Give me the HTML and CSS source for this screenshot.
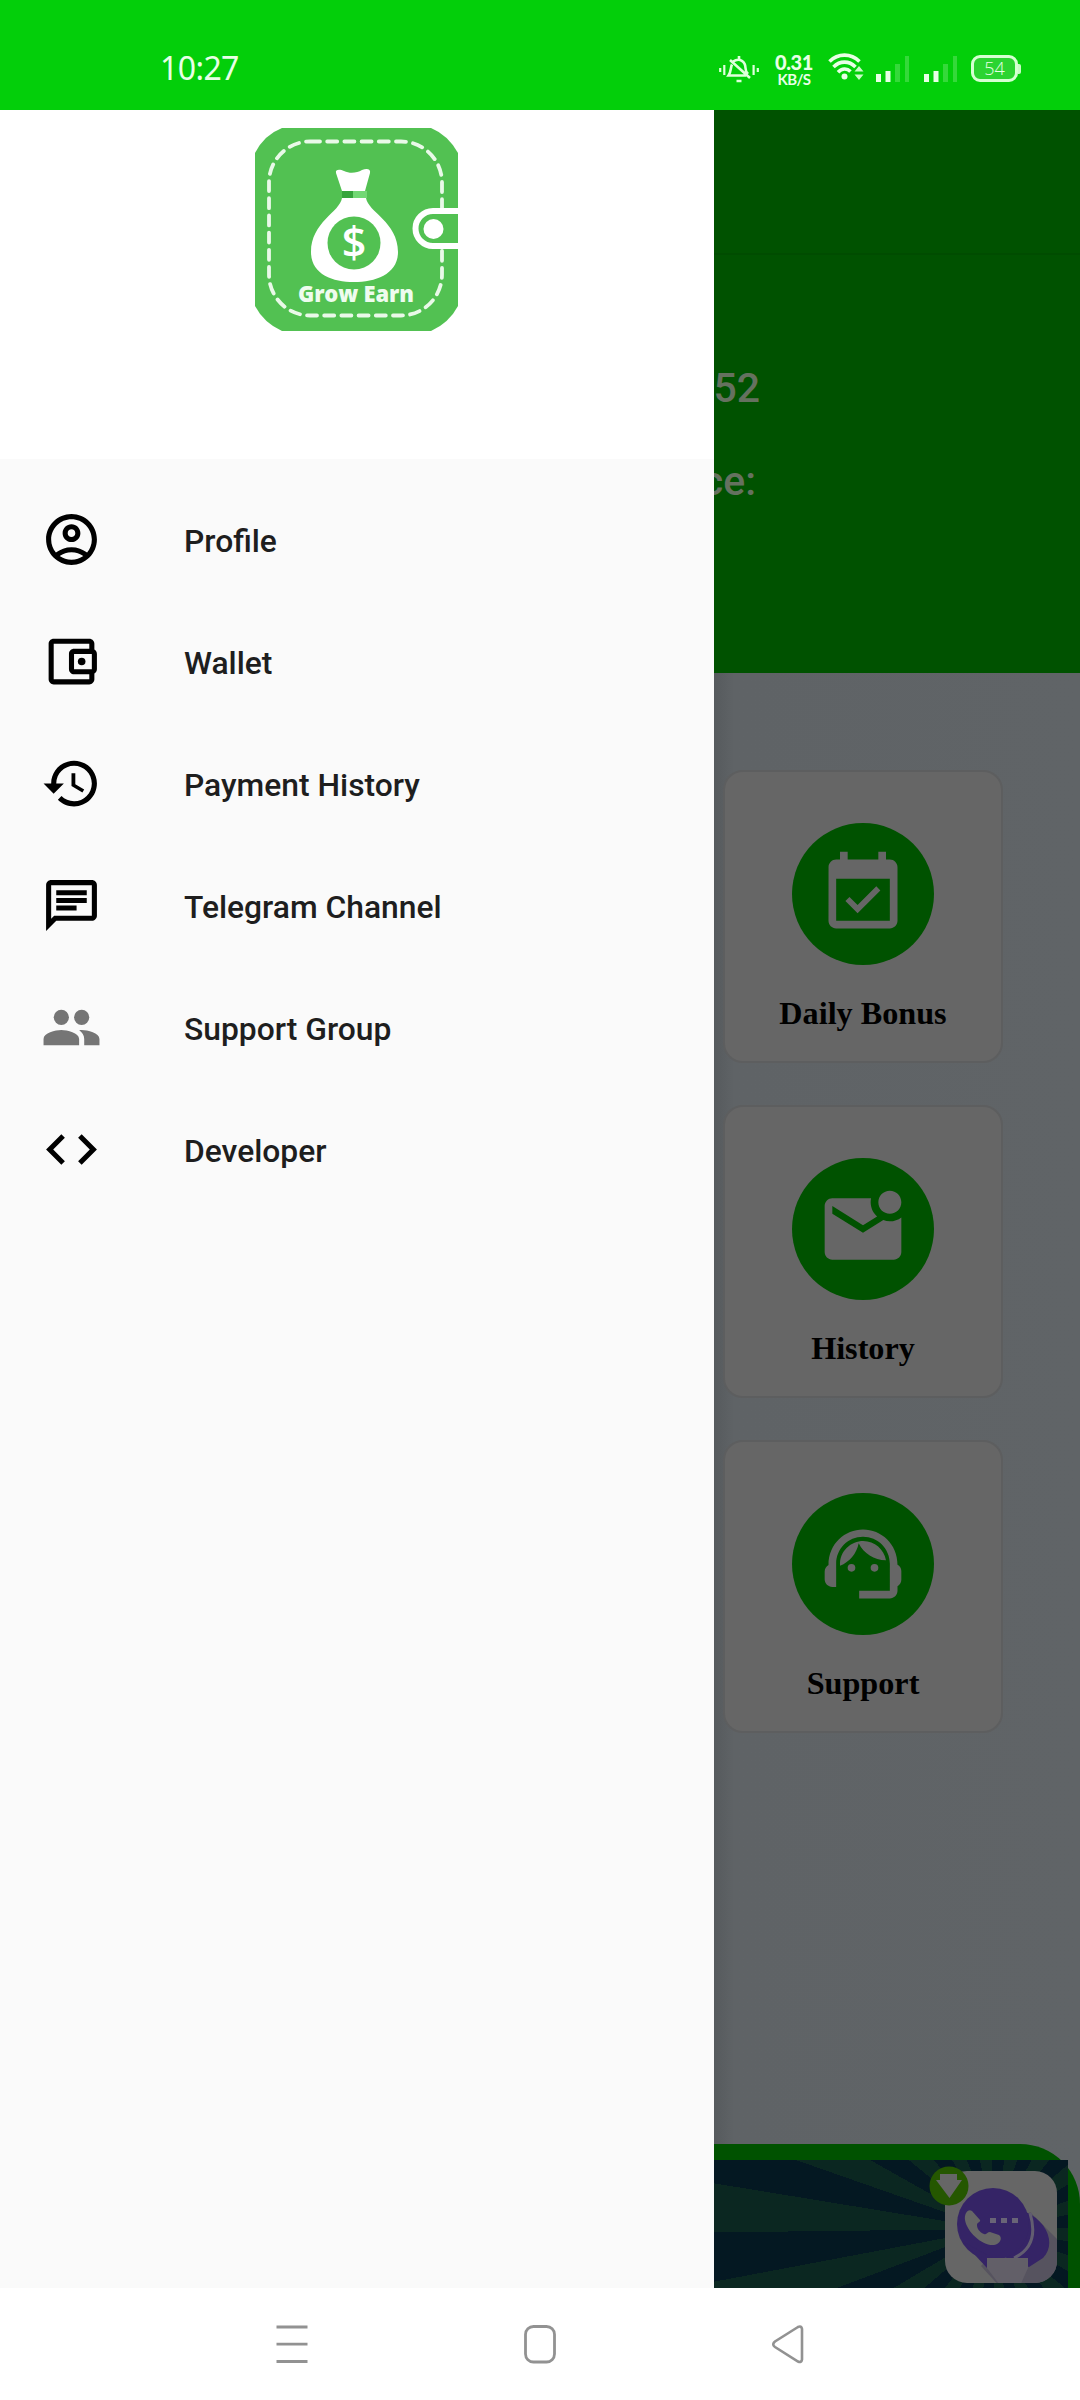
FILE: index.html
```html
<!DOCTYPE html>
<html lang="en">
<head>
<meta charset="utf-8">
<title>Grow Earn</title>
<link rel="stylesheet" href="styles.css">
</head>
<body>
<header class="status">
  <time class="clock">10:27</time>
  <div class="indicators">
    <svg class="ic-bell" width="40" height="28" viewBox="0 0 40 28" fill="none" stroke="#dfffdc" stroke-width="2.600">
      <path d="M1.200 12v4M5.300 9v10M34.600 9v10M38.800 12v4" stroke-width="2.200"/>
      <path d="M13 8.500C11.500 11 12.500 15 9.500 19.500H27M14 5.500C21 1 26.500 6 26.500 12c0 2.500 1 4.500 2.500 6M20 0v3M11 4l20 18M17.500 25h5"/>
    </svg>
    <div class="speed"><b>0.31</b><span>KB/S</span></div>
    <svg class="ic-wifi" width="36" height="28" viewBox="0 0 36 28" fill="none" stroke="#e8ffe6" stroke-width="3.600">
      <path d="M1.500 8.500C10 0 23 0 31.500 8.500M5.500 14C12 7.500 21 7.500 27.500 14M10 19.200C14 15 19 15 22.500 18.500"/>
      <circle cx="16.500" cy="23.500" r="3" fill="#e8ffe6" stroke="none"/>
      <path d="M31 13l4.500 5.500h-9zM31 27l4.500-5.500h-9z" fill="#c9fbc6" stroke="none"/>
    </svg>
    <svg class="ic-signal" width="34" height="26" viewBox="0 0 34 26" fill="#e8ffe6">
      <path d="M0 18h5v8H0zM9.500 15h5v11h-5z"/><path d="M19 8h5v18h-5zM29 0h4v26h-4z" opacity=".22"/>
    </svg>
    <svg class="ic-signal second" width="34" height="26" viewBox="0 0 34 26" fill="#e8ffe6">
      <path d="M0 18h5v8H0zM9.500 15h5v11h-5z"/><path d="M19 8h5v18h-5zM29 0h4v26h-4z" opacity=".22"/>
    </svg>
    <div class="battery">54</div><i class="tip"></i>
  </div>
</header>
<main class="stage">
  <aside class="drawer">
    <div class="brand">
      <svg width="203" height="203" viewBox="0 0 203 203">
        <path d="M27 0H176Q193 7 203 25V178Q194 195 176 203H27Q9 195 0 178V25Q9 7 27 0z" fill="#52c152"/>
        <rect x="14" y="13.500" width="173" height="174" rx="41" fill="none" stroke="#e9f9e8" stroke-width="3.800" stroke-dasharray="10 7.200" stroke-linecap="round"/>
        <path d="M204 83H178a17.500 17.500 0 0 0 0 35h26" fill="#52c152" stroke="#fff" stroke-width="6"/>
        <circle cx="178.500" cy="101" r="10" fill="#fff"/>
        <path d="M81 45C80 41 85 41 89 43 95 46 102 45 107 42c5-2 9-1 8 3l-5 18H87z" fill="#fff"/>
        <path d="M87 63h11v7H87z" fill="#35a43b"/><path d="M98 63h14v7H98z" fill="#72d874"/>
        <path d="M87 70h24c2 14 32 24 32 54 0 22-22 30-44 30s-43-8-43-30c0-30 29-40 31-54z" fill="#fff"/>
        <circle cx="99" cy="115" r="26.500" fill="#52c152"/>
        <text x="99" y="130" text-anchor="middle" class="dollar">$</text>
        <text x="101" y="174" text-anchor="middle" class="brand-name" textLength="116">Grow Earn</text>
      </svg>
    </div>
    <nav class="menu">
      <a class="item"><svg viewBox="0 0 24 24"><path d="M12 2C6.480 2 2 6.480 2 12s4.480 10 10 10 10-4.480 10-10S17.520 2 12 2zM7.350 18.500C8.660 17.560 10.260 17 12 17s3.340.56 4.650 1.500C15.340 19.440 13.740 20 12 20s-3.340-.56-4.650-1.500zm10.790-1.380C16.450 15.800 14.320 15 12 15s-4.450.8-6.140 2.120C4.700 15.730 4 13.950 4 12c0-4.420 3.580-8 8-8s8 3.580 8 8c0 1.950-.7 3.730-1.860 5.120zM12 6c-1.930 0-3.500 1.570-3.500 3.500S10.070 13 12 13s3.500-1.570 3.500-3.500S13.930 6 12 6zm0 5c-.83 0-1.500-.67-1.500-1.500S11.170 8 12 8s1.500.67 1.500 1.500S12.830 11 12 11z"/></svg><span>Profile</span></a>
      <a class="item"><svg viewBox="0 0 24 24"><path d="M21 7.280V5c0-1.100-.9-2-2-2H5c-1.110 0-2 .9-2 2v14c0 1.100.89 2 2 2h14c1.100 0 2-.9 2-2v-2.280c.59-.35 1-.98 1-1.720V9c0-.74-.41-1.370-1-1.720zM20 9v6h-7V9h7zM5 19V5h14v2h-6c-1.100 0-2 .9-2 2v6c0 1.100.9 2 2 2h6v2H5z"/><circle cx="16" cy="12" r="1.500"/></svg><span>Wallet</span></a>
      <a class="item"><svg viewBox="0 0 24 24"><path d="M13 3c-4.970 0-9 4.030-9 9H1l3.890 3.890.07.14L9 12H6c0-3.870 3.130-7 7-7s7 3.130 7 7-3.130 7-7 7c-1.930 0-3.680-.79-4.940-2.060l-1.420 1.420C8.270 19.990 10.510 21 13 21c4.970 0 9-4.030 9-9s-4.030-9-9-9zm-1 5v5l4.280 2.540.72-1.210-3.500-2.080V8H12z"/></svg><span>Payment History</span></a>
      <a class="item"><svg viewBox="0 0 24 24"><path d="M4 4h16v12H5.170L4 17.170V4m0-2c-1.100 0-1.990.9-1.990 2L2 22l4-4h14c1.100 0 2-.9 2-2V4c0-1.100-.9-2-2-2H4zm2 10h8v2H6v-2zm0-3h12v2H6V9zm0-3h12v2H6V6z"/></svg><span>Telegram Channel</span></a>
      <a class="item muted"><svg viewBox="0 0 24 24"><circle cx="8" cy="8" r="3"/><circle cx="16" cy="8" r="3"/><path d="M8 13c-2.330 0-7 1.170-7 3.500V19h14v-2.500C15 14.170 10.330 13 8 13zM16 13c-.29 0-.62.02-.97.050 1.160.84 1.970 1.970 1.970 3.450V19h6v-2.500c0-2.330-4.670-3.500-7-3.500z"/></svg><span>Support Group</span></a>
      <a class="item"><svg viewBox="0 0 24 24"><path d="M9.400 16.600L4.800 12l4.600-4.600L8 6l-6 6 6 6 1.400-1.400zm5.200 0l4.600-4.600-4.600-4.600L16 6l6 6-6 6-1.400-1.400z"/></svg><span>Developer</span></a>
    </nav>
  </aside>
  <section class="page">
    <div class="appbar"></div>
    <div class="hero"><p class="id">52</p><p class="bal">ce:</p></div>
    <div class="cards">
      <article class="card"><span class="disc"><svg viewBox="0 0 24 24"><path d="M16.530 11.060L15.470 10l-4.880 4.880-2.120-2.120-1.060 1.060L10.590 17l5.940-5.940zM19 3h-1V1h-2v2H8V1H6v2H5c-1.110 0-1.990.9-1.990 2L3 19c0 1.100.89 2 2 2h14c1.100 0 2-.9 2-2V5c0-1.100-.9-2-2-2zm0 16H5V8h14v11z"/></svg></span><h2>Daily Bonus</h2></article>
      <article class="card"><span class="disc"><svg viewBox="0 0 24 24"><path d="M22 8.980V18c0 1.100-.9 2-2 2H4c-1.100 0-2-.9-2-2V6c0-1.100.9-2 2-2h10.100c-.06.320-.1.660-.1 1 0 1.480.65 2.790 1.670 3.710L12 11 4 6v2l8 5 5.300-3.320c.54.200 1.100.320 1.700.320 1.130 0 2.160-.39 3-1.020zM16 5c0 1.660 1.340 3 3 3s3-1.340 3-3-1.340-3-3-3-3 1.340-3 3z"/></svg></span><h2>History</h2></article>
      <article class="card"><span class="disc"><svg viewBox="0 0 24 24"><path d="M21 12.220C21 6.730 16.740 3 12 3c-4.690 0-9 3.650-9 9.280-.6.340-1 .98-1 1.720v2c0 1.100.9 2 2 2h1v-6.100c0-3.870 3.130-7 7-7s7 3.130 7 7V19h-8v2h8c1.100 0 2-.9 2-2v-1.220c.59-.31 1-.92 1-1.640v-2.300c0-.7-.41-1.310-1-1.620z"/><circle cx="9" cy="13" r="1"/><circle cx="15" cy="13" r="1"/><path d="M18 11.030C17.520 8.180 15.040 6 12.050 6c-3.030 0-6.290 2.510-6.030 6.450 2.470-1.010 4.330-3.210 4.860-5.890 1.310 2.630 4 4.440 7.120 4.470z"/></svg></span><h2>Support</h2></article>
    </div>
    <div class="bottom">
      <div class="ad">
        <svg width="142" height="128" viewBox="0 0 142 128">
          <defs><clipPath id="tile"><rect x="19" y="11" width="112" height="112" rx="22"/></clipPath></defs>
          <g clip-path="url(#tile)">
            <rect x="18" y="11" width="114" height="112" fill="#666"/>
            <path d="M104 52L142 90V128H75L55 106z" fill="#56535f"/>
            <path d="M100 52C122 62 130 85 117 98L103 107 80 98z" fill="#352466"/>
            <circle cx="67" cy="64" r="36" fill="#352466"/>
            <path d="M36 81L61 108V95z" fill="#352466"/>
            <path d="M104 53c7 23 1 37-16 45" fill="none" stroke="#625d70" stroke-width="3"/>
            <path d="M61 98h41v10l-9 20H76L61 108z" fill="#625f68"/>
            <path d="M46 51c-4-3-8 3-7 9 2 12 17 26 29 25 6-1 9-7 5-10l-9-3c-3 0-3 3-6 2-5-2-7-6-7-9 0-3 4-3 3-5z" fill="#666"/>
            <path d="M64 58h6v5h-6zM75 58h6v5h-6zM86 58h6v5h-6z" fill="#696477"/>
          </g>
          <circle cx="23" cy="26" r="19.500" fill="#255700"/>
          <path d="M14 14h17v6h5L23.500 38 10 20h4z" fill="#666"/>
        </svg>
      </div>
    </div>
  </section>
</main>
<footer class="navbar">
  <svg width="32" height="40" viewBox="0 0 32 40"><path d="M.5 3h31M.5 20.200h31M.5 37.500h31"/></svg>
  <svg width="32" height="40" viewBox="0 0 32 40"><rect x="1.500" y="2.500" width="29" height="35.500" rx="8"/></svg>
  <svg width="32" height="40" viewBox="0 0 32 40"><path d="M26 3L3 17.500Q-.5 20.500 3 23L26 37.500Q29.500 39 30 35.500V5Q29.500 1.500 26 3z" stroke-width="2.600"/></svg>
</footer>
</body>
</html>
```
FILE: styles.css
```css
* { box-sizing: border-box; }
body {
  margin: 0;
  width: 1080px;
  height: 2400px;
  display: grid;
  grid-template-rows: 110px 2178px 112px;
  font-family: Roboto, sans-serif;
  overflow: hidden;
}
p, h2 { margin: 0; }

.status {
  background: #03cf0a;
  color: #e8ffe6;
  display: flex;
  justify-content: space-between;
  align-items: flex-start;
  padding: 52px 59px 0 160px;
}
.clock { font: 32px/32px "Noto Sans", sans-serif; letter-spacing: -0.6px; }
.indicators { display: flex; align-items: flex-start; }
.ic-bell { margin: 4px 1px 0 -1px; }
.speed {
  width: 40px;
  margin: 0 14px;
  display: flex;
  flex-direction: column;
  align-items: center;
  font-family: Lato, sans-serif;
  font-weight: 700;
}
.speed b { font-size: 20px; line-height: 20px; letter-spacing: -0.4px; }
.speed span { font-size: 15px; line-height: 15px; letter-spacing: -0.6px; }
.ic-wifi { margin: 1px 12px 0 0; }
.ic-signal { margin: 4px 14px 0 0; }
.second { margin-right: 13px; }
.battery {
  width: 47px;
  height: 27px;
  margin-top: 3px;
  border: 3px solid #d5ffd2;
  border-radius: 9px;
  background: #2bd431;
  font: 300 18px/21px "Open Sans", sans-serif;
  text-align: center;
}
.tip { width: 3px; height: 10px; margin-top: 12px; background: #c9fbc6; border-radius: 0 2px 2px 0; }

.stage { display: grid; grid-template-columns: 714px 366px; min-height: 0; }
.drawer { background: #fafafa; }
.brand { height: 349px; padding: 18px 1px 0 0; background: #fff; display: flex; justify-content: center; align-items: flex-start; }
.brand-name { font: 800 22px "Open Sans", sans-serif; fill: #eefcee; }
.dollar { font: 600 43px "Open Sans", sans-serif; fill: #fff; }
.menu { padding-top: 19px; }
.item {
  height: 122px;
  padding: 0 41px;
  display: flex;
  align-items: center;
  gap: 82px;
  color: #1e1e1e;
  font-size: 31.800px;
  font-weight: 500;
}
.item svg { width: 61px; height: 61px; fill: #000; }
.item span { padding-top: 3px; }
.muted svg { fill: #757575; }

.page {
  display: flex;
  flex-direction: column;
  background: linear-gradient(90deg, #565a5d, #5f6366 20px, #606467);
  min-width: 0;
}
.appbar { height: 145px; background: #005200; border-bottom: 2px solid #004c00; }
.hero {
  height: 418px;
  padding-top: 109px;
  background: #005200;
  color: #65715f;
  font-size: 41px;
  font-weight: 500;
  line-height: 48px;
}
.hero p { display: flex; justify-content: flex-end; overflow: hidden; }
.id { width: 46px; }
.bal { width: 42px; margin-top: 45px; }
.cards { padding: 97px 0 0 9px; display: flex; flex-direction: column; gap: 42px; flex: 1; }
.card {
  width: 280px;
  height: 293px;
  padding-top: 51px;
  border: 2px solid #5d5e5f;
  border-radius: 20px;
  background: #666;
  display: flex;
  flex-direction: column;
  align-items: center;
}
.disc { width: 142px; height: 142px; border-radius: 50%; background: #005200; display: grid; place-items: center; }
.disc svg { width: 92px; height: 92px; fill: #666; }
.card h2 { margin-top: 30px; font: bold 32.200px/37px "Liberation Serif", serif; color: #000; }
.bottom { height: 144px; padding-top: 16px; background: #005200; border-radius: 0 60px 0 0; }
.ad {
  width: 354px;
  height: 128px;
  padding-left: 212px;
  background: repeating-conic-gradient(from 269.3deg at 279px 69px, #0b2721 0 10deg, #041822 10deg 20deg);
}
.ad svg { display: block; }

.navbar { background: #fff; display: flex; justify-content: space-between; padding: 36px 276px 0 276px; }
.navbar svg { fill: none; stroke: #929292; stroke-width: 2.800; }
```
